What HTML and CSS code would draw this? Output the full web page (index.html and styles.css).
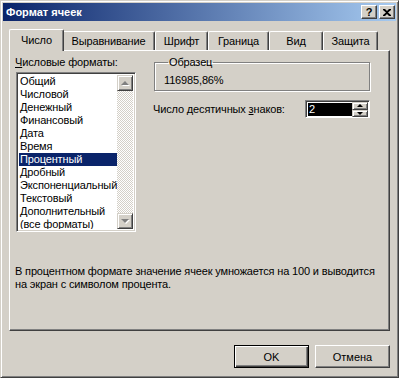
FILE: index.html
```html
<!DOCTYPE html>
<html lang="ru">
<head>
    <meta charset="utf-8">
    <title>Формат ячеек</title>
    <link rel="stylesheet" href="styles.css">
</head>
<body>
    <div class="window">
        <div class="titlebar">
            <span class="title">Формат ячеек</span>
            <div class="tb-buttons">
                <button class="tb-btn">?</button>
                <button class="tb-btn close">
                    <svg width="8" height="7" viewBox="0 0 8 7"><path d="M0 0h2l2 2 2-2h2v1L5 3.5 8 6v1H6L4 5 2 7H0V6l3-2.5L0 1z" fill="#000"/></svg>
                </button>
            </div>
        </div>

        <div class="content">
            <div class="tabs">
                <div class="tab selected w-num">Число</div>
                <div class="tab w-align">Выравнивание</div>
                <div class="tab w-font">Шрифт</div>
                <div class="tab w-border">Граница</div>
                <div class="tab w-view">Вид</div>
                <div class="tab w-protect">Защита</div>
            </div>

            <div class="panel">
                <div class="panel-top">
                    <div class="left-col">
                        <div class="label"><u>Ч</u>исловые форматы:</div>
                        <div class="listbox">
                            <ul class="items">
                                <li>Общий</li>
                                <li>Числовой</li>
                                <li>Денежный</li>
                                <li>Финансовый</li>
                                <li>Дата</li>
                                <li>Время</li>
                                <li class="active">Процентный</li>
                                <li>Дробный</li>
                                <li>Экспоненциальный</li>
                                <li>Текстовый</li>
                                <li>Дополнительный</li>
                                <li>(все форматы)</li>
                            </ul>
                            <div class="vscroll">
                                <div class="arrow-btn up"><span class="tri"></span></div>
                                <div class="track"></div>
                                <div class="arrow-btn down"><span class="tri"></span></div>
                            </div>
                        </div>
                    </div>

                    <div class="right-col">
                        <fieldset class="sample">
                            <legend>Образец</legend>
                            <div class="sample-value">116985,86%</div>
                        </fieldset>
                        <div class="decimals">
                            <span>Число десятичных <u>з</u>наков:</span>
                            <div class="spinner">
                                <div class="spin-edit"><span class="sel">2</span></div>
                                <div class="spin-btns">
                                    <div class="spin-btn up"><span class="tri"></span></div>
                                    <div class="spin-btn down"><span class="tri"></span></div>
                                </div>
                            </div>
                        </div>
                    </div>
                </div>

                <p class="desc">В процентном формате значение ячеек умножается на 100 и выводится на экран с символом процента.</p>
            </div>

            <div class="buttons">
                <button class="btn default">OK</button>
                <button class="btn">Отмена</button>
            </div>
        </div>
    </div>
</body>
</html>
```

FILE: styles.css
```css
body {
    margin: 0;
    background: #d4d0c8;
    font-family: "Liberation Sans", Arial, sans-serif;
    font-size: 11px;
    line-height: 13px;
    letter-spacing: -0.15px;
    color: #000;
}

.window {
    width: 399px;
    height: 378px;
    box-sizing: border-box;
    background: #d4d0c8;
    border: 1px solid;
    border-color: #d4d0c8 #404040 #404040 #d4d0c8;
    box-shadow: inset 1px 1px 0 #fff, inset -1px -1px 0 #808080;
    padding: 2px;
}

/* title bar */
.titlebar {
    height: 18px;
    display: flex;
    align-items: center;
    justify-content: space-between;
    padding: 0 1px 0 3px;
    background: linear-gradient(to right, #0a246a, #a6caf0);
}

.title {
    color: #fff;
    font-weight: bold;
    font-size: 11px;
    letter-spacing: 0;
}

.tb-buttons {
    display: flex;
    gap: 2px;
}

.tb-btn {
    width: 16px;
    height: 14px;
    padding: 0;
    margin: 0;
    box-sizing: border-box;
    background: #d4d0c8;
    border: 1px solid;
    border-color: #fff #404040 #404040 #fff;
    box-shadow: inset -1px -1px 0 #808080;
    font-family: "Liberation Sans", Arial, sans-serif;
    font-weight: bold;
    font-size: 11px;
    line-height: 11px;
    display: flex;
    align-items: center;
    justify-content: center;
}

/* dialog body */
.content {
    padding: 0 0 0 6px;
}

.tabs {
    display: flex;
    align-items: flex-end;
    height: 21px;
    margin-top: 8px;
    padding-left: 2px;
}

.tab {
    height: 19px;
    box-sizing: border-box;
    border-top: 1px solid #fff;
    border-left: 1px solid #fff;
    border-right: 1px solid #404040;
    border-top-left-radius: 2px;
    border-top-right-radius: 2px;
    box-shadow: inset -1px 0 0 #808080;
    text-align: center;
    padding-top: 3px;
    background: #d4d0c8;
}

.tab.selected {
    height: 22px;
    margin: 0 -2px -1px;
    position: relative;
    z-index: 2;
    padding-top: 4px;
}

.w-num { width: 55px; }
.w-align { width: 93px; }
.w-font { width: 53px; }
.w-border { width: 61px; }
.w-view { width: 54px; }
.w-protect { width: 55px; }

.panel {
    width: 381px;
    height: 281px;
    box-sizing: border-box;
    border: 1px solid;
    border-color: #fff #404040 #404040 #fff;
    box-shadow: inset -1px -1px 0 #808080;
    padding: 5px 0 0 0;
}

.panel-top {
    display: flex;
}

.left-col {
    margin-left: 5px;
    width: 121px;
}

.label {
    height: 13px;
}

.listbox {
    margin: 3px 0 0 1px;
    width: 120px;
    height: 160px;
    box-sizing: border-box;
    border: 1px solid;
    border-color: #808080 #fff #fff #808080;
    box-shadow: inset 1px 1px 0 #404040, inset -1px -1px 0 #d4d0c8;
    background: #fff;
    padding: 2px;
    display: flex;
}

.items {
    list-style: none;
    margin: 0;
    padding: 0;
    flex: 1;
    overflow: hidden;
    white-space: nowrap;
}

.items li {
    height: 13px;
    padding-left: 1px;
}

.items li.active {
    background: #0a246a;
    color: #fff;
}

.vscroll {
    width: 16px;
    display: flex;
    flex-direction: column;
}

.track {
    flex: 1;
    background-color: #d4d0c8;
    background-image: conic-gradient(#fff 25%, #d4d0c8 0 50%, #fff 0 75%, #d4d0c8 0);
    background-size: 2px 2px;
}

.arrow-btn {
    height: 16px;
    box-sizing: border-box;
    background: #d4d0c8;
    border: 1px solid;
    border-color: #d4d0c8 #404040 #404040 #d4d0c8;
    box-shadow: inset 1px 1px 0 #fff, inset -1px -1px 0 #808080;
    display: flex;
    align-items: center;
    justify-content: center;
}

.tri {
    width: 0;
    height: 0;
    border-left: 4px solid transparent;
    border-right: 4px solid transparent;
    filter: drop-shadow(1px 1px 0 #fff);
}

.up .tri {
    border-bottom: 4px solid #808080;
}

.down .tri {
    border-top: 4px solid #808080;
}

.right-col {
    margin-left: 18px;
    width: 216px;
}

.sample {
    margin: 0;
    padding: 5px 9px 3px;
    border: 1px solid #808080;
    box-shadow: inset 1px 1px 0 #fff, 1px 1px 0 #fff;
    min-width: 0;
}

.sample legend {
    padding: 0 1px;
    margin-left: 4px;
}

.sample-value {
    height: 13px;
}

.decimals {
    display: flex;
    align-items: center;
    justify-content: space-between;
    margin: 9px 0 0 -1px;
    height: 18px;
}

.spinner {
    width: 65px;
    height: 18px;
    box-sizing: border-box;
    border: 1px solid;
    border-color: #808080 #fff #fff #808080;
    box-shadow: inset 1px 1px 0 #404040;
    background: #fff;
    padding: 2px 1px 1px 2px;
    display: flex;
}

.spin-edit {
    flex: 1;
    background: #000;
    color: #fff;
    line-height: 12px;
    padding-left: 1px;
}

.spin-btns {
    width: 16px;
    display: flex;
    flex-direction: column;
    margin: -1px 0 -1px 0;
}

.spin-btn {
    flex: 1;
    box-sizing: border-box;
    background: #d4d0c8;
    border: 1px solid;
    border-color: #d4d0c8 #404040 #404040 #d4d0c8;
    box-shadow: inset 1px 1px 0 #fff, inset -1px -1px 0 #808080;
    display: flex;
    align-items: center;
    justify-content: center;
}

.spin-btn .tri {
    border-left-width: 3px;
    border-right-width: 3px;
    filter: none;
}

.spin-btn.up .tri {
    border-bottom: 3px solid #000;
}

.spin-btn.down .tri {
    border-top: 3px solid #000;
}

.desc {
    margin: 33px 0 0 5px;
}

.buttons {
    width: 381px;
    display: flex;
    justify-content: flex-end;
    gap: 6px;
    margin-top: 14px;
}

.btn {
    width: 75px;
    height: 23px;
    box-sizing: border-box;
    padding: 0;
    background: #d4d0c8;
    border: 1px solid;
    border-color: #fff #404040 #404040 #fff;
    box-shadow: inset -1px -1px 0 #808080;
    font-family: "Liberation Sans", Arial, sans-serif;
    font-size: 11px;
    color: #000;
}

.btn.default {
    border: 1px solid #000;
    box-shadow: inset 1px 1px 0 #fff, inset -1px -1px 0 #404040, inset -2px -2px 0 #808080;
}
```
